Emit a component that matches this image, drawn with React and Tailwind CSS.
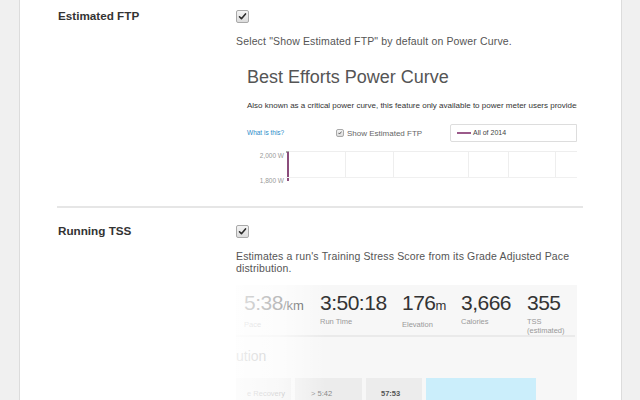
const font = { fontFamily: '"Liberation Sans", Arial, sans-serif' };

function Checkbox({ size = 13, className = '' }) {
  return (
    <span
      className={`flex items-center justify-center rounded-[2px] border border-[#a9a9a9] bg-gradient-to-b from-[#f4f4f4] to-[#dcdcdc] ${className}`}
      style={{ width: size, height: size }}
    >
      <svg viewBox="0 0 12 12" width={size - 4} height={size - 4}>
        <path d="M2 6.3 L4.6 9 L10 2.6" fill="none" stroke="#2b2b2b" strokeWidth="2.1" strokeLinecap="round" strokeLinejoin="round" />
      </svg>
    </span>
  );
}

function PowerCurveShot() {
  // vertical grid lines, page x coordinates
  const gridX = [345, 393, 468, 508, 555];
  return (
    <div className="relative w-[341px] h-[126px] mt-[13px] overflow-hidden bg-white">
      <div className="pl-[11px] pt-[6px]">
        <h2 className="text-[18px] leading-[22px] text-[#555]">Best Efforts Power Curve</h2>
        <p className="mt-[13px] text-[8px] leading-[10px] text-[#333] whitespace-nowrap">
          Also known as a critical power curve, this feature only available to power meter users provides
        </p>
        <div className="flex items-center mt-[13px] h-[18px]">
          <span className="w-[89px] text-[6.5px] text-[#2a8bc9]">What is this?</span>
          <Checkbox size={8} />
          <span className="ml-[3px] w-[103px] text-[8px] text-[#666] pt-[2px]">Show Estimated FTP</span>
          <div className="flex-1 h-[18px] border border-[#ddd] rounded-l-[2px] flex items-center pl-[6px] gap-[2px]">
            <span className="w-[14px] h-[1.5px] bg-[#9b5a8a]" />
            <span className="text-[7px] text-[#444]">All of 2014</span>
          </div>
        </div>
        <div className="flex mt-[9px]">
          <div className="w-[39px] flex flex-col items-end pr-[2px] gap-[15px] text-[6.5px] text-[#999]">
            <span>2,000 W</span>
            <span>1,800 W</span>
          </div>
          <div className="relative flex-1 h-[30px] border-t border-[#eee]">
            <div className="absolute left-0 top-[-1px] h-[2px] w-[3px] bg-[#aaa]" />
            <div className="absolute left-[1px] top-0 h-[29px] w-[1.5px] bg-[#8b4d7c]" />
            <div className="absolute left-0 right-0 top-[25px] border-t border-[#f0f0f0]" />
            {gridX.map((x) => (
              <div key={x} className="absolute top-0 h-[25px] border-l border-[#eee]" style={{ left: x - 286 }} />
            ))}
          </div>
        </div>
      </div>
    </div>
  );
}

function Stat({ value, unit, label, sub, className = '' }) {
  return (
    <div className={className}>
      <div className="text-[21px] leading-[22px] tracking-[-0.5px] text-[#333]">
        {value}
        {unit && <span className="text-[13px] tracking-normal">{unit}</span>}
      </div>
      <div className="text-[7.5px] leading-[9px] mt-[3px] text-[#999]">{label}</div>
      {sub && <div className="text-[7.5px] leading-[9px] text-[#999]">{sub}</div>}
    </div>
  );
}

function RunShot() {
  return (
    <div className="relative w-[341px] h-[115px] mt-[11px] overflow-hidden bg-[#f7f7f7]">
      <div className="flex pt-[7px] pl-[8px] h-[52px] border-b-2 border-[#eaeaea] mr-[2px]">
        <Stat value="5:38" unit="/km" label="Pace" className="w-[76px]" />
        <Stat value="3:50:18" label="Run Time" className="w-[82px]" />
        <Stat value="176" unit="m" label="Elevation" className="w-[59px]" />
        <Stat value="3,666" label="Calories" className="w-[66px]" />
        <Stat value="355" label="TSS" sub="(estimated)" />
      </div>
      <div className="pt-[10px] text-[14px] leading-[18px] text-[#888]">ution</div>
      <div className="flex gap-[4px] mt-[13px] h-[30px] text-[7.5px] text-[#888]">
        <div className="w-[55px] bg-[#ececec] flex items-start pt-[10px] justify-end pr-[6px] whitespace-nowrap">e Recovery</div>
        <div className="w-[67px] bg-[#ececec] pt-[10px] pl-[16px]">&gt; 5:42</div>
        <div className="w-[56px] bg-[#ececec] pt-[10px] pl-[15px] font-bold text-[#555]">57:53</div>
        <div className="w-[110px] bg-[#cbeefb]" />
      </div>
      <div className="absolute inset-y-0 left-0 w-[90px] bg-gradient-to-r from-white/85 via-white/65 to-white/0" />
    </div>
  );
}

function Setting({ label, desc, children }) {
  return (
    <div className="flex">
      <div className="w-[179px] pl-[1px] text-[11.7px] font-bold text-[#333] leading-[14px] pt-[1px]">{label}</div>
      <div className="w-[347px]">
        <Checkbox className="mt-[2px]" />
        <p className="mt-[12px] text-[10.5px] leading-[12px] text-[#555] tracking-[0.15px]">{desc}</p>
        {children}
      </div>
    </div>
  );
}

export default function App() {
  return (
    <div className="w-[640px] h-[400px] overflow-hidden bg-[#f0f0f0] flex" style={font}>
      <div className="ml-[19px] w-[603px] h-full bg-white border-x border-[#dcdcdc]">
        <div className="pl-[37px] pr-[38px] pt-[8px]">
          <Setting label="Estimated FTP" desc={'Select "Show Estimated FTP" by default on Power Curve.'}>
            <PowerCurveShot />
          </Setting>
          <div className="mt-[20px] border-t-2 border-[#e6e6e6]" />
          <div className="pt-[15px]">
            <Setting
              label="Running TSS"
              desc="Estimates a run's Training Stress Score from its Grade Adjusted Pace distribution."
            >
              <RunShot />
            </Setting>
          </div>
        </div>
      </div>
    </div>
  );
}
